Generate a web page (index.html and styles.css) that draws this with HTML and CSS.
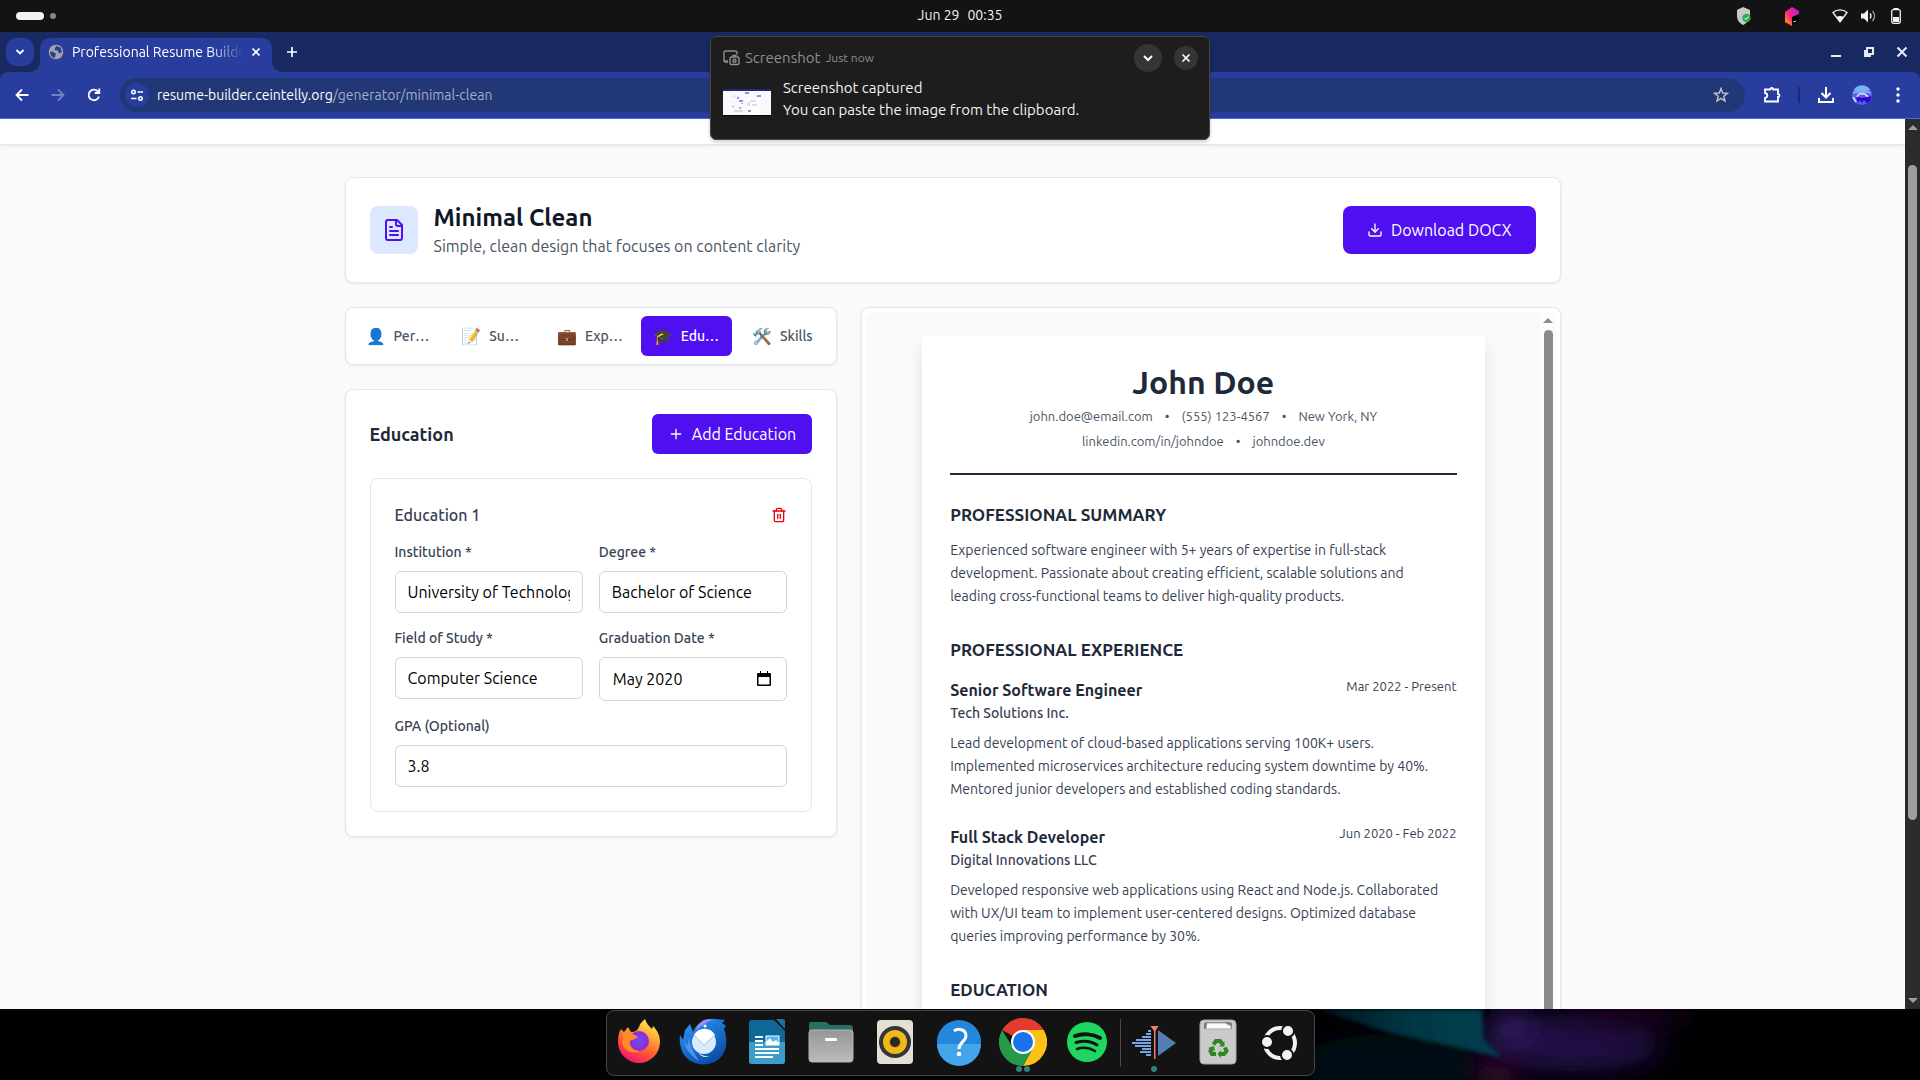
FILE: index.html
```html
<!DOCTYPE html>
<html lang="en">
<head>
  <meta charset="UTF-8">
  <meta name="viewport" content="width=device-width, initial-scale=1.0">
  <title>Professional Resume Builder</title>
  <link rel="stylesheet" href="styles.css">
</head>
<body>

  <!-- System bar -->
  <div class="system-bar">
    <div class="workspaces">
      <span class="workspace-active"></span>
      <span class="workspace-dot"></span>
    </div>
    <div class="clock"><span>Jun 29</span><span>00:35</span></div>
    <div class="tray">
      <svg class="tray-shield" width="16" height="18" viewBox="0 0 16 18">
        <path d="M7 0 L14 3 V9 C14 13 11 16 7 18 C3 16 1 13 1 9 V3 Z" fill="#c9c9c9"/>
        <circle cx="10.5" cy="11" r="4.2" fill="#28b04a"/>
        <path d="M8.5 11 L10 12.5 L12.5 9.5" stroke="#fff" stroke-width="1" fill="none"/>
      </svg>
      <svg class="tray-toolbox" width="16" height="19" viewBox="0 0 16 19">
        <defs>
          <linearGradient id="cube" x1="0" y1="1" x2="1" y2="0">
            <stop offset="0.1" stop-color="#ff9a1f"/>
            <stop offset="0.4" stop-color="#ff2e6b"/>
            <stop offset="1" stop-color="#a515f5"/>
          </linearGradient>
        </defs>
        <path d="M8 0 L15 4 V8 L8 11 V19 L1 15 V5 Z" fill="url(#cube)"/>
        <path d="M8 10 L15 7 V14 L8 18 Z" fill="#000"/>
        <path d="M9.5 15 L12 14" stroke="#fff"/>
      </svg>
      <svg width="16" height="16" viewBox="0 0 16 16">
        <path d="M1 4.5 C5 1 11 1 15 4.5 L8 14 Z" fill="none" stroke="#f2f2f2" stroke-width="1.3"/>
        <path d="M4.5 9 C6.5 7.5 9.5 7.5 11.5 9 L8 14 Z" fill="#f2f2f2"/>
      </svg>
      <svg width="16" height="16" viewBox="0 0 16 16" fill="none" stroke="#f2f2f2" stroke-width="1.3">
        <path d="M1 5.5 H4 L8 1.5 V14.5 L4 10.5 H1 Z" fill="#f2f2f2" stroke="none"/>
        <path d="M10 5.5 C11.2 7 11.2 9 10 10.5"/>
        <path d="M12.5 3 C15 6 15 10 12.5 13" stroke="#999"/>
      </svg>
      <svg width="16" height="18" viewBox="0 0 16 18">
        <rect x="3.7" y="2.7" width="8.6" height="13.6" rx="2" fill="none" stroke="#f2f2f2" stroke-width="1.3"/>
        <rect x="5.5" y="1" width="5" height="2" fill="#f2f2f2"/>
        <rect x="5" y="10" width="6" height="5" fill="#f2f2f2"/>
      </svg>
    </div>
  </div>

  <div class="browser-chrome">
    <!-- Browser tabs -->
    <div class="tab-strip">
      <button class="tab-search" aria-label="Search tabs">
        <svg width="10" height="10" viewBox="0 0 10 10" fill="none" stroke="#fff" stroke-width="1.8"><path d="M1.5 3 L5 6.5 L8.5 3"/></svg>
      </button>
      <div class="browser-tab">
        <svg width="16" height="16" viewBox="0 0 16 16">
          <circle cx="8" cy="8" r="7.3" fill="#a3a3a3"/>
          <path d="M2 8 C5 7 7 8.5 8 10 L6.5 14 C4 13.5 2 11 2 8 Z M8 2 L12.5 3.5 L14 8 L11 9.5 L10 6.5 L6.5 6 Z" fill="#283d9d"/>
        </svg>
        <span class="tab-title">Professional Resume Builder</span>
        <button class="icon-btn" aria-label="Close tab">
          <svg width="10" height="10" viewBox="0 0 10 10" stroke="#fff" stroke-width="1.7"><path d="M1.5 1.5 L8.5 8.5 M8.5 1.5 L1.5 8.5"/></svg>
        </button>
      </div>
      <button class="icon-btn new-tab" aria-label="New tab">
        <svg width="12" height="12" viewBox="0 0 12 12" stroke="#fff" stroke-width="1.7"><path d="M6 1 V11 M1 6 H11"/></svg>
      </button>
      <div class="window-controls">
        <button class="icon-btn" aria-label="Minimize">
          <svg width="12" height="12" viewBox="0 0 12 12"><rect x="1" y="9" width="10" height="2" fill="#e8eaf2"/></svg>
        </button>
        <button class="icon-btn" aria-label="Restore">
          <svg width="12" height="12" viewBox="0 0 12 12" fill="none" stroke="#e8eaf2" stroke-width="2"><path d="M4 2 H10 V8 H4 Z M2 4 V10 H8"/></svg>
        </button>
        <button class="icon-btn" aria-label="Close">
          <svg width="12" height="12" viewBox="0 0 12 12" stroke="#e8eaf2" stroke-width="2"><path d="M1.5 1.5 L10.5 10.5 M10.5 1.5 L1.5 10.5"/></svg>
        </button>
      </div>
    </div>

    <!-- Browser toolbar -->
    <div class="toolbar">
      <div class="nav-buttons">
        <button class="icon-btn" aria-label="Back">
          <svg width="16" height="16" viewBox="0 0 16 16" fill="none" stroke="#fff" stroke-width="1.8"><path d="M14.5 8 H2.5 M8 2.5 L2.5 8 L8 13.5"/></svg>
        </button>
        <button class="icon-btn" aria-label="Forward">
          <svg width="16" height="16" viewBox="0 0 16 16" fill="none" stroke="#7482c4" stroke-width="1.8"><path d="M1.5 8 H13.5 M8 2.5 L13.5 8 L8 13.5"/></svg>
        </button>
        <button class="icon-btn" aria-label="Reload">
          <svg width="16" height="16" viewBox="0 0 16 16" fill="none" stroke="#fff" stroke-width="1.8"><path d="M13 9.5 A5.3 5.3 0 1 1 12 4.5 L13 5.5 M13.3 1.5 V6 H8.8"/></svg>
        </button>
      </div>
      <div class="omnibox">
        <span class="site-chip">
          <svg width="14" height="14" viewBox="0 0 14 14" fill="none" stroke="#fff" stroke-width="1.6"><circle cx="3.5" cy="4" r="1.7"/><path d="M7.5 4 H13 M1 10.5 H6.5"/><circle cx="10.5" cy="10.5" r="1.7"/></svg>
        </span>
        <span class="url">resume-builder.ceintelly.org<span class="url-path">/generator/minimal-clean</span></span>
        <button class="icon-btn" aria-label="Bookmark this page">
          <svg width="16" height="16" viewBox="0 0 16 16" fill="none" stroke="#c5c5c5" stroke-width="1.4"><path d="M8 1.5 L9.7 6 L14.5 6.3 L10.8 9.3 L12 14 L8 11.4 L4 14 L5.2 9.3 L1.5 6.3 L6.3 6 Z"/></svg>
        </button>
      </div>
      <div class="toolbar-actions">
        <button class="icon-btn" aria-label="Extensions">
          <svg width="18" height="18" viewBox="0 0 18 18" fill="none" stroke="#fff" stroke-width="1.8"><path d="M2 3.5 H7.2 C7.2 1.5 10.2 1.5 10.2 3.5 H15 V8 C17 8 17 11 15 11 V15.5 H2 V12 C5 11.5 5 7.5 2 7 Z"/></svg>
        </button>
        <span class="toolbar-divider"></span>
        <button class="icon-btn" aria-label="Downloads">
          <svg width="18" height="18" viewBox="0 0 18 18" fill="none" stroke="#fff" stroke-width="2"><path d="M9 1 V11 M4.5 7 L9 11.5 L13.5 7 M2 12 V16 H16 V12"/></svg>
        </button>
        <button class="icon-btn" aria-label="Profile">
          <svg width="20" height="20" viewBox="0 0 20 20">
            <circle cx="10" cy="10" r="10" fill="#5360ef"/>
            <path d="M2 4.5 A10 10 0 0 1 18 4.5 L16 6 H3 Z" fill="#6cbcf2"/>
            <path d="M1 8 L4 7 H16 L19 8" fill="none" stroke="#a9b0f7" stroke-width="1.5"/>
            <path d="M5 12 C6 8 13 7 16 12 M1 12 L4 17" fill="none" stroke="#d5d4fb" stroke-width="1.8"/>
            <path d="M4 12 C8 13 14 13 19.5 11 A10 10 0 0 1 15 18.5 L12 15 L10 18 L8 15 L6 18 Z" fill="#3205c4"/>
          </svg>
        </button>
        <button class="icon-btn menu-btn" aria-label="Menu">
          <svg width="16" height="16" viewBox="0 0 16 16" fill="#fff"><circle cx="8" cy="2" r="1.7"/><circle cx="8" cy="8" r="1.7"/><circle cx="8" cy="14" r="1.7"/></svg>
        </button>
      </div>
    </div>
  </div>

  <!-- Web page -->
  <div class="viewport">
    <div class="page">
      <header class="site-header"></header>

      <main class="container">
        <section class="card template-header">
          <div class="template-icon">
            <svg width="24" height="24" viewBox="0 0 24 24" fill="none" stroke="#4f0ff0" stroke-width="2" stroke-linecap="round" stroke-linejoin="round"><path d="M15 2H6a2 2 0 0 0-2 2v16a2 2 0 0 0 2 2h12a2 2 0 0 0 2-2V7Z"/><path d="M14 2v4a2 2 0 0 0 2 2h4"/><path d="M10 9H8"/><path d="M16 13H8"/><path d="M16 17H8"/></svg>
          </div>
          <div class="template-text">
            <h1>Minimal Clean</h1>
            <p>Simple, clean design that focuses on content clarity</p>
          </div>
          <button class="btn btn-large">
            <svg width="16" height="16" viewBox="0 0 24 24" fill="none" stroke="#fff" stroke-width="2" stroke-linecap="round" stroke-linejoin="round"><path d="M21 15v4a2 2 0 0 1-2 2H5a2 2 0 0 1-2-2v-4"/><path d="M7 10l5 5 5-5"/><path d="M12 15V3"/></svg>
            Download DOCX
          </button>
        </section>

        <div class="builder">
          <div class="editor">
            <nav class="card section-tabs">
              <button class="section-tab"><span class="emoji">👤</span><span class="tab-label">Personal</span></button>
              <button class="section-tab"><span class="emoji">📝</span><span class="tab-label">Summary</span></button>
              <button class="section-tab"><span class="emoji">💼</span><span class="tab-label">Experience</span></button>
              <button class="section-tab active"><span class="emoji">🎓</span><span class="tab-label">Education</span></button>
              <button class="section-tab"><span class="emoji">🛠️</span><span class="tab-label">Skills</span></button>
            </nav>

            <section class="card education">
              <div class="education-header">
                <h2>Education</h2>
                <button class="btn">
                  <svg width="16" height="16" viewBox="0 0 24 24" fill="none" stroke="#fff" stroke-width="2" stroke-linecap="round"><path d="M5 12h14M12 5v14"/></svg>
                  Add Education
                </button>
              </div>

              <form class="entry">
                <div class="entry-header">
                  <h3>Education 1</h3>
                  <button type="button" class="icon-btn" aria-label="Remove education">
                    <svg width="16" height="16" viewBox="0 0 24 24" fill="none" stroke="#e7000b" stroke-width="2" stroke-linecap="round" stroke-linejoin="round"><path d="M3 6h18"/><path d="M19 6v14a2 2 0 0 1-2 2H7a2 2 0 0 1-2-2V6"/><path d="M8 6V4a2 2 0 0 1 2-2h4a2 2 0 0 1 2 2v2"/><path d="M10 11v6"/><path d="M14 11v6"/></svg>
                  </button>
                </div>
                <div class="fields">
                  <div class="form-group">
                    <label for="institution">Institution *</label>
                    <input type="text" id="institution" value="University of Technology">
                  </div>
                  <div class="form-group">
                    <label for="degree">Degree *</label>
                    <input type="text" id="degree" value="Bachelor of Science">
                  </div>
                  <div class="form-group">
                    <label for="field">Field of Study *</label>
                    <input type="text" id="field" value="Computer Science">
                  </div>
                  <div class="form-group">
                    <label for="graduation">Graduation Date *</label>
                    <div class="date-input">
                      <input type="text" id="graduation" value="May 2020">
                      <button type="button" class="icon-btn" aria-label="Show month picker">
                        <svg width="14" height="16" viewBox="0 0 14 16"><path d="M1 2 H3 V0 H4 V2 H10 V0 H11 V2 H13 Q14 2 14 3 V14 Q14 15 13 15 H1 Q0 15 0 14 V3 Q0 2 1 2 Z M1.5 6 V13.5 H12.5 V6 Z" fill="#000" fill-rule="evenodd"/></svg>
                      </button>
                    </div>
                  </div>
                  <div class="form-group wide">
                    <label for="gpa">GPA (Optional)</label>
                    <input type="text" id="gpa" value="3.8">
                  </div>
                </div>
              </form>
            </section>
          </div>

          <section class="card preview">
            <div class="preview-area">
              <article class="paper">
                <header class="resume-header">
                  <h1>John Doe</h1>
                  <div class="contact">
                    <span>john.doe@email.com</span><span>•</span><span>(555) 123-4567</span><span>•</span><span>New York, NY</span>
                  </div>
                  <div class="contact">
                    <span>linkedin.com/in/johndoe</span><span>•</span><span>johndoe.dev</span>
                  </div>
                </header>

                <section class="resume-section">
                  <h2>PROFESSIONAL SUMMARY</h2>
                  <p>Experienced software engineer with 5+ years of expertise in full-stack development. Passionate about creating efficient, scalable solutions and<br>leading cross-functional teams to deliver high-quality products.</p>
                </section>

                <section class="resume-section">
                  <h2>PROFESSIONAL EXPERIENCE</h2>
                  <div class="job">
                    <div class="job-header">
                      <div>
                        <h3>Senior Software Engineer</h3>
                        <h4>Tech Solutions Inc.</h4>
                      </div>
                      <span class="job-date">Mar 2022 - Present</span>
                    </div>
                    <p>Lead development of cloud-based applications serving 100K+ users. Implemented microservices architecture reducing system downtime by 40%. Mentored junior developers and established coding standards.</p>
                  </div>
                  <div class="job">
                    <div class="job-header">
                      <div>
                        <h3>Full Stack Developer</h3>
                        <h4>Digital Innovations LLC</h4>
                      </div>
                      <span class="job-date">Jun 2020 - Feb 2022</span>
                    </div>
                    <p>Developed responsive web applications using React and Node.js. Collaborated with UX/UI team to implement user-centered designs. Optimized database queries improving performance by 30%.</p>
                  </div>
                </section>

                <section class="resume-section">
                  <h2>EDUCATION</h2>
                </section>
              </article>
            </div>
            <div class="preview-scrollbar">
              <span class="arrow-up"></span>
              <span class="scroll-thumb"></span>
            </div>
          </section>
        </div>
      </main>
    </div>

    <div class="page-scrollbar">
      <span class="arrow-up"></span>
      <span class="scroll-track"><span class="scroll-thumb"></span></span>
      <span class="arrow-down"></span>
    </div>
  </div>

  <!-- Desktop and dock -->
  <footer class="desktop">
    <svg class="wallpaper" viewBox="0 0 1920 71" preserveAspectRatio="none">
      <defs>
        <filter id="soft" x="-100%" y="-150%" width="300%" height="400%"><feGaussianBlur stdDeviation="14"/></filter>
        <filter id="edge"><feGaussianBlur stdDeviation="2"/></filter>
        <linearGradient id="teal" x1="0" y1="0" x2="1" y2="0">
          <stop offset="0" stop-color="#001219"/>
          <stop offset="0.5" stop-color="#033644"/>
          <stop offset="1" stop-color="#04434e"/>
        </linearGradient>
      </defs>
      <rect width="1920" height="71" fill="#010103"/>
      <ellipse cx="1390" cy="55" rx="90" ry="30" fill="#061019" filter="url(#soft)"/>
      <ellipse cx="1570" cy="34" rx="90" ry="28" fill="#230d4a" filter="url(#soft)"/>
      <ellipse cx="1630" cy="5" rx="60" ry="12" fill="#1b0620" filter="url(#soft)"/>
      <ellipse cx="1495" cy="68" rx="22" ry="14" fill="#420a34" filter="url(#soft)"/>
      <path d="M1316 0 H1482 L1484 30 L1502 48 L1482 44 L1450 37 L1390 24 Z" fill="url(#teal)" filter="url(#edge)"/>
      <ellipse cx="1512" cy="18" rx="18" ry="14" fill="#3b2070" filter="url(#soft)"/>
    </svg>

    <div class="dock">
      <button class="dock-item" aria-label="Firefox">
        <svg width="48" height="48" viewBox="0 0 48 48">
          <defs>
            <linearGradient id="fox" x1="0.8" y1="0" x2="0.3" y2="1">
              <stop offset="0" stop-color="#fff44f"/><stop offset="0.35" stop-color="#ffa436"/>
              <stop offset="0.65" stop-color="#ff5a2f"/><stop offset="1" stop-color="#f01079"/>
            </linearGradient>
            <radialGradient id="globe"><stop offset="0" stop-color="#6f4cf0"/><stop offset="1" stop-color="#9429d4"/></radialGradient>
          </defs>
          <path d="M6 11 L9 14 L13 9 L16 14 C20 14 22 13 24 9 C25 5 28 3 30 1 C31 5 34 8 37 11 L38 8 C42 12 45 17 45 24 A21 21 0 0 1 3 24 C3 18 4 14 6 11 Z" fill="url(#fox)"/>
          <circle cx="24" cy="23" r="10" fill="url(#globe)"/>
          <path d="M8 16 C13 14 19 16 23 19 C20 22 17 21 15 23 C14 28 18 33 25 33 C18 37 8 33 7 24 Z" fill="#ff8a2a"/>
        </svg>
      </button>
      <button class="dock-item" aria-label="Thunderbird">
        <svg width="48" height="48" viewBox="0 0 48 48">
          <defs><linearGradient id="bird" x1="0" y1="0" x2="0.6" y2="1"><stop offset="0" stop-color="#2f9bfa"/><stop offset="1" stop-color="#0a4ea8"/></linearGradient></defs>
          <path d="M6 12 L11 6 L14 14 C18 4 28 0 36 1 L46 2 L43 5 L47 8 L45 11 C49 22 48 33 41 40 C32 49 16 48 8 40 C2 35 0 25 1 17 L4 22 Z" fill="url(#bird)"/>
          <path d="M17 12 C20 2 28 0 34 2 C29 3 24 7 17 12 Z" fill="#9d8bf5"/>
          <path d="M3 20 C7 30 9 36 20 43 C12 30 10 24 11 18 L8 28 Z" fill="#4c93ee"/>
          <circle cx="25" cy="24" r="12" fill="#d8ecfb"/>
          <path d="M15 17 L25 27 L36 17 A12 12 0 0 0 15 17 Z" fill="#fff"/>
          <path d="M15 17 L25 27 L36 17" fill="none" stroke="#9dc6ec"/>
          <path d="M19 34 C22 37 26 39 31 38 C26 40 22 39 19 34 Z" fill="#d8ecfb"/>
          <circle cx="26" cy="8" r="1.5" fill="#fff"/>
        </svg>
      </button>
      <button class="dock-item" aria-label="Writer">
        <svg width="48" height="48" viewBox="0 0 48 48">
          <path d="M9 2 H31 L42 13 V43 Q42 46 39 46 H9 Q6 46 6 43 V5 Q6 2 9 2 Z" fill="#0e6795"/>
          <path d="M6 24 H42 V43 Q42 46 39 46 H9 Q6 46 6 43 Z" fill="#3c9dcb"/>
          <path d="M33 1 H40 Q42 1 42 3 V11 Z" fill="#1c719f"/>
          <path d="M12 19 H20 M12 23 H20 M12 27 H20 M12 31 H36 M12 35 H36 M12 39 H30" stroke="#fff" stroke-width="2"/>
          <rect x="23" y="18" width="13" height="9" fill="#4db7f0" stroke="#fff"/>
          <path d="M23 27 V24 L27 20 L30 24 L33 22 L36 25 V27 Z" fill="#fff"/>
        </svg>
      </button>
      <button class="dock-item" aria-label="Files">
        <svg width="48" height="48" viewBox="0 0 48 48">
          <defs><linearGradient id="grey" x1="0" y1="0" x2="0" y2="1"><stop offset="0" stop-color="#969696"/><stop offset="1" stop-color="#bcbcbc"/></linearGradient></defs>
          <path d="M4 4 H19 L23 7 H43 Q46 7 46 10 V24 H2 V7 Q2 4 4 4 Z" fill="#276e65"/>
          <rect x="2" y="12" width="44" height="32" rx="3" fill="url(#grey)" stroke="#b5b5b5"/>
          <rect x="18" y="20" width="12" height="3" rx="1" fill="#fff"/>
        </svg>
      </button>
      <button class="dock-item" aria-label="Rhythmbox">
        <svg width="48" height="48" viewBox="0 0 48 48">
          <rect x="6" y="2" width="36" height="44" rx="4" fill="#e4dfd3"/>
          <circle cx="24" cy="24" r="16" fill="#33343c"/>
          <circle cx="24" cy="24" r="12" fill="#f0b91a"/>
          <circle cx="24" cy="24" r="6" fill="#d79d08"/>
          <circle cx="24" cy="24" r="5" fill="#282828"/>
        </svg>
      </button>
      <button class="dock-item" aria-label="Help">
        <svg width="48" height="48" viewBox="0 0 48 48">
          <circle cx="24" cy="24" r="22" fill="#2388dc"/>
          <path d="M2 26 H46 A22 22 0 0 1 2 26 Z" fill="#45a5ea"/>
          <path d="M19 13 C23 10 31 11 31 18 C31 23 24 24 24 31" fill="none" stroke="#fff" stroke-width="3"/>
          <circle cx="24" cy="36" r="2.3" fill="#fff"/>
        </svg>
      </button>
      <button class="dock-item" aria-label="Chrome">
        <svg width="48" height="48" viewBox="0 0 48 48">
          <path d="M24 24 L3.2 12 A24 24 0 0 1 44.8 12 Z" fill="#e33b2e"/>
          <path d="M24 12 H44.8 A24 24 0 0 1 24 48 L34 30 Z" fill="#fbc116"/>
          <path d="M3.2 12 A24 24 0 0 0 24 48 L34 30 L14 30 Z" fill="#279847"/>
          <circle cx="24" cy="24" r="12" fill="#fff"/>
          <circle cx="24" cy="24" r="10" fill="#1a73e8"/>
        </svg>
        <span class="running-dots"><i></i><i></i></span>
      </button>
      <button class="dock-item" aria-label="Spotify">
        <svg width="48" height="48" viewBox="0 0 48 48">
          <circle cx="24" cy="24" r="20" fill="#1ed760"/>
          <g fill="none" stroke="#131313" stroke-linecap="round"><path d="M12 18 C20 15 30 16 37 20" stroke-width="4"/><path d="M13 24.5 C20 22.5 28 23 34 27" stroke-width="3"/><path d="M14 31 C20 29 26 29.5 32 33" stroke-width="2.5"/></g>
        </svg>
      </button>
      <span class="dock-divider"></span>
      <button class="dock-item" aria-label="Audio editor">
        <svg width="48" height="48" viewBox="0 0 48 48">
          <path d="M18 13 H21 M16 16 H21 M12 19 H21 M6 22 H21 M2 25 H21 M5 28 H21 M12 31 H21 M10 34 H21 M16 37 H21" stroke="#75a7e6" stroke-width="2"/>
          <path d="M28 12 L46 25 L28 38 Z" fill="#527db5"/>
          <path d="M20.5 8 H28.5 L25.5 13 V41 H24 V13 Z" fill="#f17d6b"/>
        </svg>
        <span class="running-dots"><i></i></span>
      </button>
      <button class="dock-item" aria-label="Trash">
        <svg width="48" height="48" viewBox="0 0 48 48">
          <rect x="6" y="2" width="36" height="44" rx="4" fill="#cbcbcb" stroke="#a8a8a8"/>
          <path d="M10 11 V7 Q10 4 13 4 H35 Q38 4 38 7 V11 Z" fill="#777"/>
          <path d="M12 11 L13 5 H31 L37 8 V11 Z" fill="#fafafa" stroke="#aaa"/>
          <g fill="none" stroke="#2a8a1d" stroke-width="4"><path d="M19.5 26.5 L22 23 H26 L28 25.5"/><path d="M31 29.5 L32.5 33 L30 36 H27"/><path d="M22 36 H18 L16.5 33 L18 30"/></g>
          <path d="M30.5 23 V28.5 H25 Z M27 32 V40 L23.5 36 Z M14 30 L20 28 L21 33 Z" fill="#2a8a1d"/>
        </svg>
      </button>
      <button class="dock-item" aria-label="Show apps">
        <svg width="48" height="48" viewBox="0 0 48 48">
          <circle cx="22" cy="25" r="15" fill="none" stroke="#f2f2f2" stroke-width="4"/>
          <g fill="#f2f2f2" stroke="#131313" stroke-width="2"><circle cx="30" cy="13" r="6"/><circle cx="9" cy="24" r="6"/><circle cx="29" cy="37" r="6"/></g>
        </svg>
      </button>
    </div>
  </footer>

  <!-- Notification -->
  <aside class="notification">
    <div class="notification-header">
      <svg width="17" height="16" viewBox="0 0 17 16" fill="none" stroke="#8f8f8f" stroke-width="1.4"><path d="M5 12 H2.5 Q1 12 1 10.5 V2.5 Q1 1 2.5 1 H12.5 Q14 1 14 2.5 V4.5"/><rect x="7" y="7" width="9" height="7.5" rx="1.5"/><circle cx="11.5" cy="10.7" r="1.5"/><path d="M10 6.5 V5.5 H13 V6.5"/><path d="M1 11 H5"/></svg>
      <span class="notification-app">Screenshot</span>
      <span class="notification-time">Just now</span>
      <button class="round-btn round-btn-large" aria-label="Expand">
        <svg width="10" height="10" viewBox="0 0 10 10" fill="none" stroke="#fff" stroke-width="2"><path d="M1 3 L5 7 L9 3"/></svg>
      </button>
      <button class="round-btn" aria-label="Dismiss">
        <svg width="10" height="10" viewBox="0 0 10 10" stroke="#fff" stroke-width="1.7"><path d="M1.5 1.5 L8.5 8.5 M8.5 1.5 L1.5 8.5"/></svg>
      </button>
    </div>
    <div class="notification-body">
      <svg width="48" height="27" viewBox="0 0 48 27">
        <rect width="48" height="27" fill="#f8f9fd"/><rect width="48" height="2" fill="#1c2c74"/><rect y="26" width="48" height="1" fill="#050505"/>
        <path d="M22 4 H26 M34 7 H38 M14 9 H16 M16 12 H20" stroke="#4f0ff0"/>
        <path d="M9 7 H15" stroke="#d5def5"/><rect x="23" y="9" width="14" height="17" fill="#fff"/>
        <path d="M27 12 H33 M24 14 H27 M29 16 H34 M24 16 H27" stroke="#b9bdc9"/>
        <path d="M19 14 V15 M10 17 V18 M17 18 V20" stroke="#c36"/><path d="M11 22 H20" stroke="#cbb6a4"/><path d="M25 22 H28" stroke="#333"/>
      </svg>
      <div>
        <p>Screenshot captured</p>
        <p>You can paste the image from the clipboard.</p>
      </div>
    </div>
  </aside>

</body>
</html>
```
FILE: styles.css
```css
* {
  box-sizing: border-box;
  margin: 0;
  padding: 0;
}

body {
  font-family: Ubuntu, "Noto Sans", sans-serif;
  font-size: 16px;
  line-height: 24px;
  height: 100vh;
  display: flex;
  flex-direction: column;
  overflow: hidden;
  color: #1e2939;
  background-color: #000;
}

button,
input {
  font: inherit;
}

button {
  border: none;
  background: none;
  cursor: pointer;
}

svg {
  display: block;
  flex-shrink: 0;
}

.icon-btn {
  display: flex;
  align-items: center;
  justify-content: center;
}

/* System bar */
.system-bar {
  height: 32px;
  display: grid;
  grid-template-columns: 1fr auto 1fr;
  align-items: center;
  padding: 0 16px;
  background-color: #131313;
  color: #f2f2f2;
  font-size: 14px;
  line-height: 20px;
}

.workspaces {
  display: flex;
  align-items: center;
  gap: 6px;
}

.workspace-active {
  width: 28px;
  height: 8px;
  border-radius: 4px;
  background-color: #f2f2f2;
}

.workspace-dot {
  width: 6px;
  height: 6px;
  border-radius: 50%;
  background-color: #858585;
}

.clock {
  display: flex;
  gap: 8px;
  padding-bottom: 2px;
}

.tray {
  display: flex;
  align-items: center;
  justify-content: flex-end;
  gap: 12px;
}

.tray-shield,
.tray-toolbox {
  margin-right: 20px;
}

/* Browser tabs */
.browser-chrome {
  background-color: #192962;
  color: #fff;
}

.tab-strip {
  height: 40px;
  display: flex;
  align-items: flex-end;
  padding: 0 6px;
}

.tab-search {
  width: 28px;
  height: 28px;
  margin: 0 6px 6px 0;
  display: flex;
  align-items: center;
  justify-content: center;
  border-radius: 10px;
  background-color: #283d9d;
}

.browser-tab {
  position: relative;
  width: 232px;
  height: 34px;
  padding: 0 11px 6px 8px;
  display: flex;
  align-items: center;
  gap: 8px;
  border-radius: 10px 10px 0 0;
  background-color: #283d9d;
}

/* Curved feet of the tab */
.browser-tab::before,
.browser-tab::after {
  content: "";
  position: absolute;
  bottom: 0;
  width: 10px;
  height: 10px;
}

.browser-tab::before {
  right: 100%;
  background: radial-gradient(circle at 0 0, transparent 10px, #283d9d 10px);
}

.browser-tab::after {
  left: 100%;
  background: radial-gradient(circle at 100% 0, transparent 10px, #283d9d 10px);
}

.tab-title {
  flex: 1;
  overflow: hidden;
  white-space: nowrap;
  font-size: 14px;
  line-height: 20px;
  -webkit-mask-image: linear-gradient(to right, #000 80%, transparent);
  mask-image: linear-gradient(to right, #000 80%, transparent);
}

.new-tab {
  width: 28px;
  height: 28px;
  margin: 0 0 6px 6px;
}

.window-controls {
  margin-left: auto;
  padding: 0 6px 14px 0;
  display: flex;
  gap: 21px;
}

/* Browser toolbar */
.toolbar {
  height: 47px;
  display: flex;
  align-items: center;
  padding: 0 14px;
  border-bottom: 1px solid #4a6fc4;
  border-radius: 8px 8px 0 0;
  background-color: #283d9d;
}

.nav-buttons {
  display: flex;
  gap: 20px;
}

.omnibox {
  flex: 1;
  height: 34px;
  margin: 0 18px;
  padding: 0 16px 0 5px;
  display: flex;
  align-items: center;
  border-radius: 17px;
  background-color: #223776;
}

.site-chip {
  width: 24px;
  height: 24px;
  margin-right: 8px;
  display: flex;
  align-items: center;
  justify-content: center;
  border-radius: 50%;
  background-color: #283d9d;
}

.url {
  flex: 1;
  font-size: 14px;
  line-height: 20px;
}

.url-path {
  color: #a3adc9;
}

.toolbar-actions {
  display: flex;
  align-items: center;
  gap: 17px;
}

.toolbar-divider {
  width: 2px;
  height: 16px;
  background-color: #1b2c6b;
}

.menu-btn {
  padding-left: 1px;
}

/* Viewport */
.viewport {
  flex: 1;
  min-height: 0;
  display: flex;
  background-color: #f9fafb;
}

.page {
  flex: 1;
  overflow: hidden;
}

.site-header {
  height: 26px;
  background-color: #fff;
  border-bottom: 1px solid #e5e7eb;
  box-shadow: 0 1px 3px rgba(0, 0, 0, 0.08);
}

.container {
  max-width: 1280px;
  margin: 0 auto;
  padding: 32px;
  display: flex;
  flex-direction: column;
  gap: 24px;
}

.card {
  background-color: #fff;
  border: 1px solid #e5e7eb;
  border-radius: 8px;
  box-shadow: 0 1px 3px rgba(0, 0, 0, 0.08);
}

.btn {
  height: 40px;
  padding: 0 16px 1px;
  display: flex;
  align-items: center;
  gap: 8px;
  border-radius: 6px;
  background-color: #4f0ff0;
  color: #fff;
}

.btn-large {
  height: 48px;
  padding: 0 24px 1px;
  border-radius: 8px;
}

.template-header {
  padding: 24px;
  display: flex;
  align-items: center;
  gap: 16px;
}

.template-icon {
  width: 48px;
  height: 48px;
  display: flex;
  align-items: center;
  justify-content: center;
  border-radius: 8px;
  background-color: #dbe8fe;
}

.template-text {
  flex: 1;
}

.template-text h1 {
  font-size: 24px;
  line-height: 32px;
  font-weight: 600;
  color: #101828;
}

.template-text p {
  color: #4a5565;
}

.builder {
  display: grid;
  grid-template-columns: repeat(12, 1fr);
  gap: 24px;
}

.editor {
  grid-column: span 5;
  display: flex;
  flex-direction: column;
  gap: 24px;
}

.section-tabs {
  padding: 8px;
  display: flex;
  gap: 4px;
}

.section-tab {
  flex: 1;
  min-width: 0;
  height: 40px;
  padding: 0 12px 1px;
  display: flex;
  align-items: center;
  justify-content: center;
  gap: 8px;
  border-radius: 6px;
  font-size: 14px;
  line-height: 20px;
  font-weight: 500;
  color: #4a5565;
}

.section-tab.active {
  background-color: #4f0ff0;
  color: #fff;
}

.emoji {
  font-size: 16px;
}

.tab-label {
  overflow: hidden;
  text-overflow: ellipsis;
  white-space: nowrap;
}

/* Education form */
.education {
  padding: 24px;
}

.education-header,
.entry-header {
  display: flex;
  align-items: center;
  justify-content: space-between;
}

.education-header {
  margin-bottom: 24px;
}

.education-header h2 {
  font-size: 18px;
  line-height: 28px;
  font-weight: 600;
}

.entry {
  padding: 24px;
  border: 1px solid #e5e7eb;
  border-radius: 8px;
}

.entry-header {
  margin-bottom: 15px;
}

.entry-header h3 {
  font-size: 16px;
  font-weight: 500;
  color: #364153;
}

.fields {
  display: grid;
  grid-template-columns: 1fr 1fr;
  gap: 15px 16px;
  align-items: start;
}

.wide {
  grid-column: span 2;
}

label {
  display: block;
  margin-bottom: 9px;
  font-size: 14px;
  line-height: 20px;
  font-weight: 500;
  color: #364153;
}

.form-group input {
  display: block;
  width: 100%;
  height: 42px;
  padding: 8px 12px 9px;
  border: 1px solid #d1d5dc;
  border-radius: 6px;
  background-color: #fff;
  color: #000;
}

.date-input {
  height: 44px;
  padding: 0 15px 0 1px;
  display: flex;
  align-items: center;
  border: 1px solid #d1d5dc;
  border-radius: 6px;
}

.date-input input {
  flex: 1;
  min-width: 0;
  border: none;
}

/* Resume preview */
.preview {
  grid-column: span 7;
  height: 900px;
  padding: 4px;
  display: flex;
}

.preview-area {
  flex: 1;
  padding: 24px 56px;
  border-radius: 8px 0 0 0;
  background-color: #f9fafb;
}

.preview-scrollbar {
  width: 15px;
  display: flex;
  flex-direction: column;
  align-items: center;
  background-color: #fcfcfc;
}

.arrow-up {
  border: 5px solid transparent;
  border-top: none;
  border-bottom-color: #8b8b8b;
}

.preview-scrollbar .arrow-up {
  margin: 6px 0 7px;
}

.scroll-thumb {
  width: 9px;
  border-radius: 5px;
  background-color: #8b8b8b;
}

.preview-scrollbar .scroll-thumb {
  flex: 1;
}

.paper {
  height: 100%;
  padding: 28px;
  background-color: #fff;
  box-shadow: 0 10px 15px rgba(0, 0, 0, 0.1);
  font-size: 14px;
  line-height: 23px;
  color: #364153;
}

.resume-header {
  padding-bottom: 19px;
  margin-bottom: 28px;
  border-bottom: 2px solid #1e2939;
  text-align: center;
}

.resume-header h1 {
  margin-bottom: 4px;
  font-size: 32px;
  line-height: 36px;
  font-weight: 600;
  color: #1e2939;
}

.contact {
  display: flex;
  justify-content: center;
  gap: 12px;
  font-size: 13px;
  line-height: 25px;
  color: #4a5565;
}

.resume-section {
  margin-bottom: 30px;
}

.resume-section h2 {
  margin-bottom: 12px;
  font-size: 17px;
  line-height: 24px;
  font-weight: 600;
  color: #1e2939;
}

.job {
  margin-bottom: 20px;
  padding-top: 4px;
}

.job-header {
  display: flex;
  justify-content: space-between;
  margin-bottom: 7px;
}

.job-header h3 {
  font-size: 16px;
  line-height: 24px;
  font-weight: 600;
  color: #1e2939;
}

.job-header h4 {
  font-size: 14px;
  line-height: 23px;
  font-weight: 500;
}

.job-date {
  font-size: 13px;
  line-height: 16px;
}

/* Page scrollbar */
.page-scrollbar {
  width: 15px;
  padding: 6px 0;
  display: flex;
  flex-direction: column;
  align-items: center;
  background-color: #2b2b2b;
}

.page-scrollbar .arrow-up {
  border-bottom-color: #9f9f9f;
}

.arrow-down {
  border: 5px solid transparent;
  border-bottom: none;
  border-top-color: #9f9f9f;
}

.scroll-track {
  flex: 1;
  padding: 35px 0 178px;
  display: flex;
}

.page-scrollbar .scroll-thumb {
  background-color: #9f9f9f;
}

/* Desktop and dock */
.desktop {
  position: relative;
  height: 71px;
  display: flex;
  justify-content: center;
}

.wallpaper {
  position: absolute;
  inset: 0;
  width: 100%;
  height: 100%;
}

.dock {
  position: relative;
  height: 66px;
  margin-top: 1px;
  display: flex;
  align-items: center;
  border: 1px solid #474747;
  border-radius: 8px;
  background-color: #131313;
}

.dock-item {
  position: relative;
  width: 64px;
  height: 64px;
  padding-bottom: 2px;
  display: flex;
  align-items: center;
  justify-content: center;
}

.running-dots {
  position: absolute;
  left: 0;
  right: 0;
  bottom: 3px;
  display: flex;
  justify-content: center;
  gap: 2px;
}

.running-dots i {
  width: 6px;
  height: 6px;
  border-radius: 50%;
  background-color: #2f8379;
}

.dock-divider {
  width: 1px;
  height: 48px;
  margin: 0 1px;
  background-color: #4a4a4a;
}

/* Notification */
.notification {
  position: absolute;
  top: 36px;
  left: 50%;
  width: 500px;
  height: 104px;
  margin-left: -250px;
  padding: 7px 11px 7px 12px;
  border: 1px solid #474747;
  border-radius: 6px;
  background-color: #1d1d1d;
  color: #f2f2f2;
  font-size: 15px;
  line-height: 22px;
  box-shadow: 0 2px 4px rgba(0, 0, 0, 0.2);
}

.notification-header {
  display: flex;
  align-items: center;
  gap: 5px;
  color: #8f8f8f;
}

.notification-time {
  flex: 1;
  font-size: 12px;
}

.round-btn {
  width: 24px;
  height: 24px;
  margin-left: 7px;
  display: flex;
  align-items: center;
  justify-content: center;
  border-radius: 50%;
  background-color: #353535;
}

.round-btn-large {
  width: 28px;
  height: 28px;
}

.notification-body {
  display: flex;
  align-items: center;
  gap: 12px;
  margin-top: 5px;
}

.notification-body svg {
  margin-top: 7px;
}
```
